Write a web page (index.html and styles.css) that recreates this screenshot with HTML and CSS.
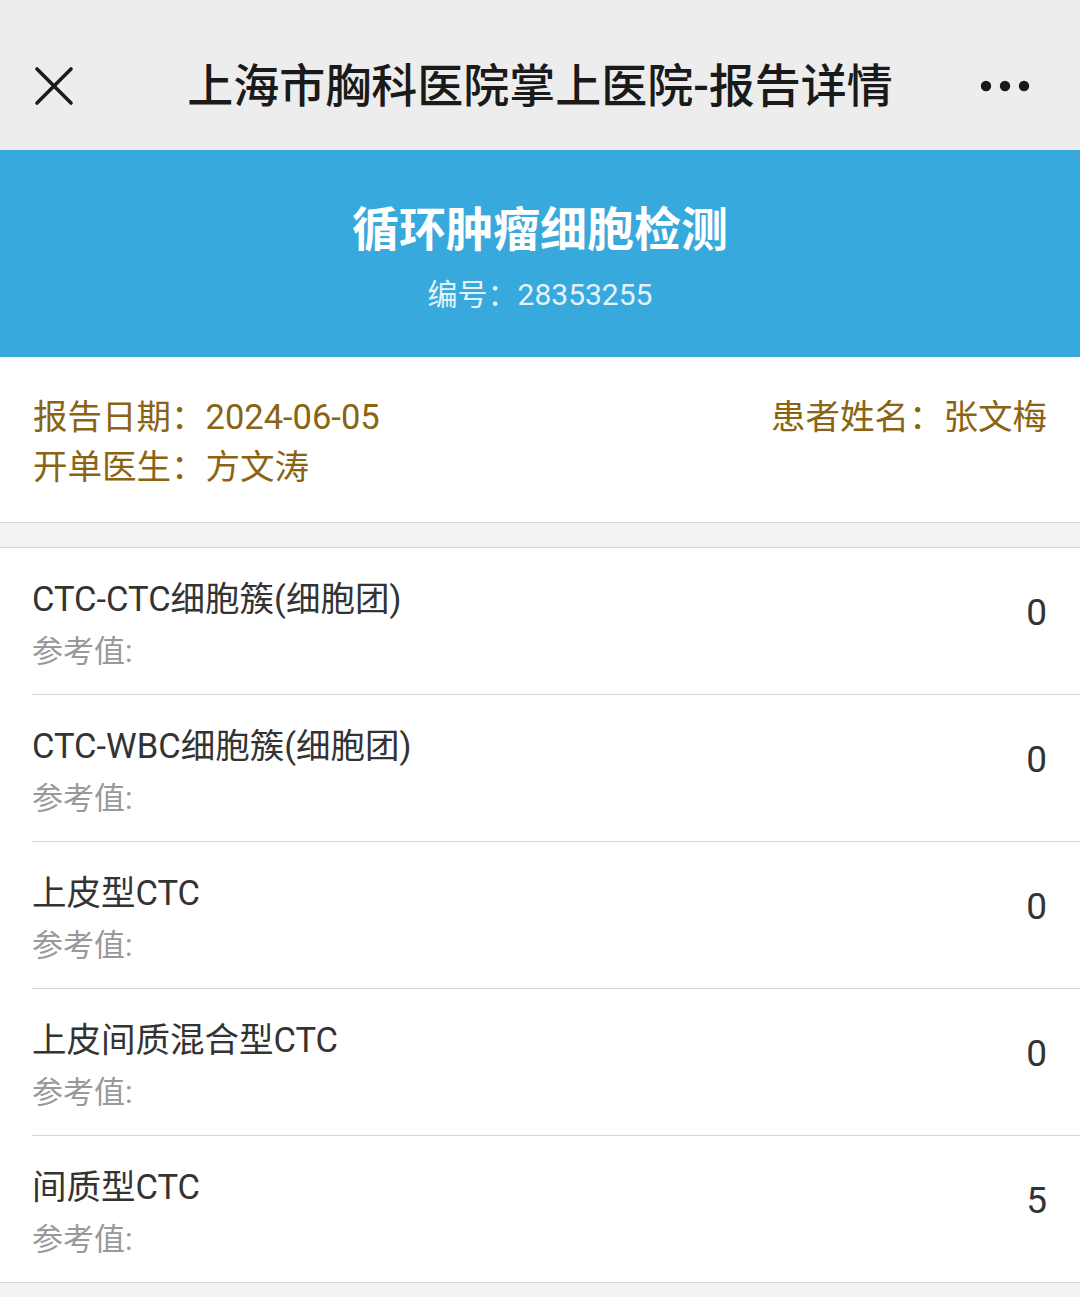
FILE: index.html
```html
<!DOCTYPE html>
<html lang="zh-CN">
<head>
<meta charset="utf-8">
<title>报告详情</title>
<link rel="stylesheet" href="styles.css">
</head>
<body>
<header class="topbar">
  <div class="bar-left"><svg class="close" width="40" height="40" viewBox="0 0 40 40"><path d="M3 3 L37 37 M37 3 L3 37" stroke="#1a1a1a" stroke-width="3.6" stroke-linecap="round" fill="none"/></svg></div>
  <h1 class="top-title">上海市胸科医院掌上医院-报告详情</h1>
  <div class="bar-right"><svg class="more" width="50" height="14" viewBox="0 0 50 14"><circle cx="6" cy="7" r="5.2" fill="#1a1a1a"/><circle cx="25" cy="7" r="5.2" fill="#1a1a1a"/><circle cx="44" cy="7" r="5.2" fill="#1a1a1a"/></svg></div>
</header>
<section class="banner">
  <div class="banner-title">循环肿瘤细胞检测</div>
  <div class="banner-no">编号：28353255</div>
</section>
<section class="info">
  <div class="info-row">
    <span>报告日期：2024-06-05</span>
    <span>患者姓名：张文梅</span>
  </div>
  <div class="info-row"><span>开单医生：方文涛</span></div>
</section>
<div class="gap"></div>
<ul class="list">
  <li class="item"><div class="item-main"><div class="item-name">CTC-CTC细胞簇(细胞团)</div><div class="item-ref">参考值:</div></div><div class="item-val">0</div></li>
  <li class="item"><div class="item-main"><div class="item-name">CTC-WBC细胞簇(细胞团)</div><div class="item-ref">参考值:</div></div><div class="item-val">0</div></li>
  <li class="item"><div class="item-main"><div class="item-name">上皮型CTC</div><div class="item-ref">参考值:</div></div><div class="item-val">0</div></li>
  <li class="item"><div class="item-main"><div class="item-name">上皮间质混合型CTC</div><div class="item-ref">参考值:</div></div><div class="item-val">0</div></li>
  <li class="item"><div class="item-main"><div class="item-name">间质型CTC</div><div class="item-ref">参考值:</div></div><div class="item-val">5</div></li>
</ul>
</body>
</html>
```
FILE: styles.css
```css
* { box-sizing: border-box; margin: 0; padding: 0; }
html, body {
  width: 1080px;
  height: 1297px;
  background: #f2f2f2;
  overflow: hidden;
  font-family: Roboto, "Noto Sans CJK SC", sans-serif;
}
.topbar {
  height: 150px;
  background: #ededed;
  display: grid;
  grid-template-columns: 1fr auto 1fr;
  align-items: center;
  padding: 22px 0 0 0;
}
.bar-left { display: flex; justify-content: flex-start; padding-left: 34px; }
.bar-right { display: flex; justify-content: flex-end; padding-right: 50px; }
.close { display: block; }
.more { display: block; }
.top-title {
  text-align: center;
  font-size: 46px;
  font-weight: 500;
  color: #1a1a1a;
  line-height: 56px;
}
.banner {
  height: 207px;
  background: #38a9dc;
  display: flex;
  flex-direction: column;
  align-items: center;
  padding-top: 52px;
}
.banner-title {
  font-size: 47px;
  font-weight: 700;
  color: #fff;
  line-height: 56px;
}
.banner-no {
  margin-top: 19px;
  font-size: 30px;
  color: #e4f3fb;
  line-height: 36px;
}
.info {
  background: #fff;
  height: 166px;
  border-bottom: 1px solid #d6d6d6;
  padding: 35px 33px 0 33px;
  color: #8a6412;
  font-size: 34.5px;
}
.info-row {
  display: flex;
  justify-content: space-between;
  line-height: 50px;
}
.gap { height: 25px; border-bottom: 1px solid #d6d6d6; }
.list {
  list-style: none;
  background: #fff;
  padding-left: 32px;
  border-bottom: 1px solid #d6d6d6;
}
.item {
  height: 147px;
  display: flex;
  align-items: center;
  justify-content: space-between;
  border-bottom: 1px solid #d6d6d6;
  padding-right: 33px;
}
.item:last-child { border-bottom: none; height: 146px; }
.item-main { padding-top: 6px; }
.item-name {
  font-size: 34.5px;
  color: #333;
  line-height: 42px;
}
.item-ref {
  margin-top: 14px;
  font-size: 31px;
  color: #999;
  line-height: 36px;
}
.item-val {
  font-size: 37px;
  color: #333;
  margin-top: -18px;
}
```
